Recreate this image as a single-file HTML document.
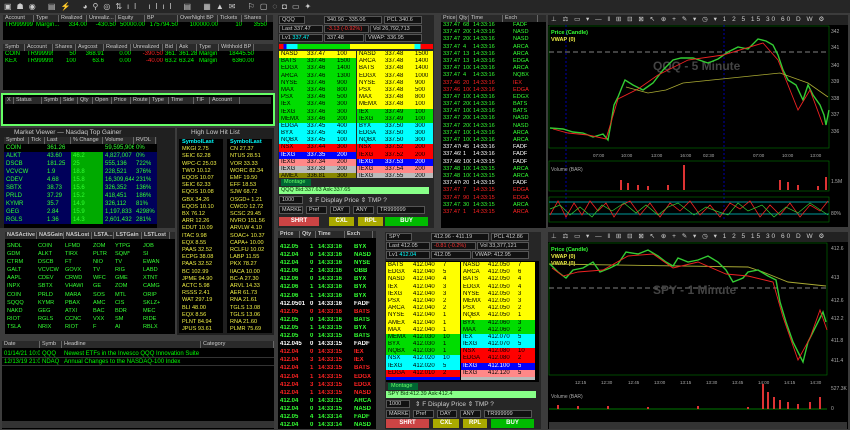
<!DOCTYPE html>
<html><head><meta charset="utf-8"><style>
*{margin:0;padding:0;box-sizing:border-box}
body{width:850px;height:429px;background:#3c3c3c;overflow:hidden;position:relative;font-family:"Liberation Sans",sans-serif;font-size:6px;color:#0f0}
.a{position:absolute}
.blk{background:#000}
.hd{background:#2a2a2a;color:#ccc;display:flex;height:7px;line-height:7px;font-size:5.5px}
.hd span{border-right:1px solid #666;padding-left:2px;overflow:hidden;white-space:nowrap}
.r{display:flex;height:7.2px;line-height:7.2px;white-space:nowrap;overflow:hidden}
.r span{overflow:hidden;padding-left:2px}
.Y{background:#ff0;color:#000}.G{background:#0d0;color:#000}.C{background:#0ff;color:#000}.R{background:#f00;color:#000}.B{background:#00f;color:#fff}.P{background:#f88;color:#000}.S{background:#bbb;color:#000}.O{background:#880;color:#000}
.g{color:#3f3}.rd{color:#f22}.w{color:#fff}.y{color:#ee4}
.btn{position:absolute;height:9px;font-size:6px;font-weight:bold;text-align:center;line-height:9px;color:#fff}
.in{position:absolute;background:#111;border:1px solid #555;color:#ccc;font-size:5.5px;line-height:7px;height:8px;padding-left:2px}
</style></head><body>
<!-- top toolbar -->
<div class="a" style="left:0;top:0;width:850px;height:13px;background:#262626"></div>
<div class="a" style="left:4px;top:2px;color:#ccc;font-size:8px;letter-spacing:5px;line-height:9px">▣☗◉ ▤⚡ ◕⚲◎⇅ıl ılıl ▤ ▦▲✉ ⚐▢◌◘▭✦</div>

<!-- account -->
<div class="a blk" style="left:3px;top:15px;width:270px;height:25px">
<div class="hd"><span style="width:31px">Account</span><span style="width:25px">Type</span><span style="width:28px">Realized</span><span style="width:29px">Unrealiz...</span><span style="width:29px">Equity</span><span style="width:33px">BP</span><span style="width:40px">OverNight BP</span><span style="width:24px">Tickets</span><span style="width:25px">Shares</span></div>
<div class="r"><span style="width:31px">TR999999</span><span style="width:25px">Margin...</span><span style="width:28px;text-align:right">334.00</span><span style="width:29px;text-align:right">-430.50</span><span style="width:29px;text-align:right">50000.00</span><span style="width:33px;text-align:right">175794.50</span><span style="width:40px;text-align:right">100000.00</span><span style="width:24px;text-align:right">10</span><span style="width:25px;text-align:right">3550</span></div>
</div>
<!-- positions -->
<div class="a blk" style="left:3px;top:44px;width:270px;height:46px">
<div class="hd"><span style="width:22px">Symb</span><span style="width:28px">Account</span><span style="width:23px">Shares</span><span style="width:28px">Avgcost</span><span style="width:27px">Realized</span><span style="width:32px">Unrealized</span><span style="width:14px">Bid</span><span style="width:20px">Ask</span><span style="width:22px">Type</span><span style="width:35px">Withhold BP</span></div>
<div class="r"><span style="width:22px">COIN</span><span style="width:28px">TR999999</span><span style="width:23px;text-align:right">50</span><span style="width:28px;text-align:right">368.91</span><span style="width:27px;text-align:right">0.00</span><span class="rd" style="width:32px;text-align:right">-390.50</span><span style="width:14px">361.1</span><span style="width:20px">361.28</span><span style="width:22px">Margin</span><span style="width:35px;text-align:right">18445.50</span></div>
<div class="r"><span style="width:22px">KEX</span><span style="width:28px">TR999999</span><span style="width:23px;text-align:right">100</span><span style="width:28px;text-align:right">63.6</span><span style="width:27px;text-align:right">0.00</span><span class="rd" style="width:32px;text-align:right">-40.00</span><span style="width:14px">63.2</span><span style="width:20px">63.24</span><span style="width:22px">Margin</span><span style="width:35px;text-align:right">6360.00</span></div>
</div>
<!-- orders -->
<div class="a blk" style="left:1px;top:93px;width:274px;height:33px;border:2px solid #6f6"><div class="hd" style="margin:2px"><span style="width:9px">X</span><span style="width:28px">Status</span><span style="width:19px">Symb</span><span style="width:17px">Side</span><span style="width:15px">Qty</span><span style="width:19px">Open</span><span style="width:19px">Price</span><span style="width:19px">Route</span><span style="width:19px">Type</span><span style="width:25px">Time</span><span style="width:16px">TIF</span><span style="width:30px">Account</span></div></div>

<!-- market viewer -->
<div class="a" style="left:0;top:128px;width:175px;height:100px;background:#202020">
<div style="height:9px;line-height:9px;color:#ccc;font-size:6.5px;padding-left:14px">Market Viewer  —  Nasdaq Top Gainer</div>
<div class="a blk" style="left:4px;top:9px;width:153px;height:91px">
<div class="hd"><span style="width:25px">Symbol</span><span style="width:16px">Tick</span><span style="width:26px">Last</span><span style="width:32px">% Change</span><span style="width:31px">Volume</span><span style="width:22px">RVOL</span></div>
<div style="color:#3f3">
<div class="r" style="height:8px;line-height:8px"><span style="width:41px">COIN</span><span style="width:26px">361.26</span><span style="width:32px"></span><span style="width:31px">59,595,906</span><span>0%</span></div>
<div class="r" style="height:8px;line-height:8px;background:#00005a"><span style="width:41px">ALKT</span><span style="width:26px">43.60</span><span style="width:32px;background:#0a0">46.2</span><span style="width:31px">4,827,007</span><span>0%</span></div>
<div class="r" style="height:8px;line-height:8px;background:#00005a"><span style="width:41px">DSCB</span><span style="width:26px">181.25</span><span style="width:32px;background:#0a0">25</span><span style="width:31px">555,136</span><span>722%</span></div>
<div class="r" style="height:8px;line-height:8px;background:#00005a"><span style="width:41px">VCVCW</span><span style="width:26px">1.9</span><span style="width:32px;background:#0a0">18.8</span><span style="width:31px">228,521</span><span>376%</span></div>
<div class="r" style="height:8px;line-height:8px;background:#00005a"><span style="width:41px">CDEV</span><span style="width:26px">4.68</span><span style="width:32px;background:#0a0">15.8</span><span style="width:31px">16,309,644</span><span>231%</span></div>
<div class="r" style="height:8px;line-height:8px;background:#00005a"><span style="width:41px">SBTX</span><span style="width:26px">38.73</span><span style="width:32px;background:#0a0">15.6</span><span style="width:31px">326,352</span><span>136%</span></div>
<div class="r" style="height:8px;line-height:8px;background:#00005a"><span style="width:41px">PRLD</span><span style="width:26px">37.29</span><span style="width:32px;background:#0a0">15.2</span><span style="width:31px">418,451</span><span>186%</span></div>
<div class="r" style="height:8px;line-height:8px;background:#00005a"><span style="width:41px">KYMR</span><span style="width:26px">35.7</span><span style="width:32px;background:#0a0">14.9</span><span style="width:31px">326,112</span><span>81%</span></div>
<div class="r" style="height:8px;line-height:8px;background:#00005a"><span style="width:41px">GEG</span><span style="width:26px">2.84</span><span style="width:32px;background:#0a0">15.9</span><span style="width:31px">1,197,833</span><span>4298%</span></div>
<div class="r" style="height:8px;line-height:8px;background:#00005a"><span style="width:41px">RGLS</span><span style="width:26px">1.36</span><span style="width:32px;background:#0a0">14.3</span><span style="width:31px">2,601,432</span><span>281%</span></div>
</div></div></div>

<!-- high low -->
<div class="a" style="left:177px;top:128px;width:97px;height:207px;background:#202020">
<div style="height:9px;line-height:9px;color:#ccc;font-size:6.5px;padding-left:14px">High Low Hit List</div>
<div class="a blk" style="left:2px;top:11px;width:44px;height:194px;color:#ee4;font-size:5.6px;line-height:7.2px;padding-left:3px">
<div style="color:#0ff;font-weight:bold">SymbolLast</div>
<div>MKGI 2.75<br>SEIC 62.28<br>WPC-C 25.03<br>TWO 10.12<br>EQOS 10.07<br>SEIC 62.33<br>EQOS 10.08<br>GBX 34.26<br>EQOS 10.10<br>BX 76.12<br>ARR 12.26<br>EDUT 10.09<br>ITAC 9.98<br>EQX 8.55<br>PAAS 32.52<br>ECPG 38.08<br>PAAS 32.52<br>BC 102.99<br>JPME 94.90<br>ACTC 5.98<br>RSSS 2.41<br>WAT 297.19<br>BLI 48.00<br>EQX 8.56<br>PLNT 84.94<br>JPUS 93.61</div></div>
<div class="a blk" style="left:50px;top:11px;width:45px;height:194px;color:#ee4;font-size:5.6px;line-height:7.2px;padding-left:3px">
<div style="color:#0ff;font-weight:bold">SymbolLast</div>
<div>CN 27.37<br>NTUS 28.51<br>VOR 33.33<br>WORC 82.34<br>EMF 19.50<br>EFF 18.53<br>SJW 68.72<br>OSGD+ 1.21<br>CWCO 12.72<br>SCSC 29.45<br>NVRO 151.56<br>ARVLW 4.10<br>SOAC+ 10.37<br>CAPA+ 10.00<br>RCLFU 10.02<br>LABP 11.55<br>PKX 78.27<br>IIACA 10.00<br>BC-A 27.30<br>ARVL 14.33<br>AER 61.73<br>RNA 21.61<br>TGLS 13.08<br>TGLS 13.06<br>RNA 21.60<br>PLMR 75.69</div></div>
</div>

<!-- NAS lists -->
<div class="a blk" style="left:5px;top:232px;width:170px;height:102px">
<div class="hd" style="font-weight:bold"><span style="width:32px">NASActive</span><span style="width:27px">NASGain</span><span style="width:28px">NASLost</span><span style="width:22px">LSTA...</span><span style="width:28px">LSTGain</span><span style="width:28px">LSTLost</span></div>
<div style="display:flex;line-height:8.1px;font-size:5.6px;margin-top:3px;color:#3f3">
<div style="width:33px;padding-left:2px">SNDL<br>GDM<br>CTRM<br>GALT<br>AAPL<br>INPX<br>COIN<br>SQQQ<br>NAKD<br>RIOT<br>TSLA</div>
<div style="width:27px">COIN<br>ALKT<br>DSCB<br>VCVCW<br>CDEV<br>SBTX<br>PRLD<br>KYMR<br>GEG<br>RGLS<br>NRIX</div>
<div style="width:28px">LFMD<br>TIRX<br>FT<br>GOVX<br>CRWD<br>VHAWI<br>MARA<br>PBAX<br>ATXI<br>CCNC<br>RIOT</div>
<div style="width:22px">ZOM<br>PLTR<br>NIO<br>TV<br>WFC<br>GE<br>SOS<br>AMC<br>BAC<br>VXX<br>F</div>
<div style="width:28px">YTPG<br>SQM*<br>TV<br>RIG<br>GME<br>ZOM<br>MTL<br>CIS<br>BDR<br>SM<br>AI</div>
<div style="width:28px">JOB<br>SI<br>EWAN<br>LABD<br>XTNT<br>CAMG<br>ORIP<br>SKLZ+<br>MEC<br>RIDE<br>RBLX</div>
</div></div>

<!-- news -->
<div class="a blk" style="left:2px;top:341px;width:272px;height:88px">
<div class="hd"><span style="width:38px">Date</span><span style="width:22px">Symb</span><span style="width:139px">Headline</span><span style="width:73px">Category</span></div>
<div class="r" style="margin-top:2px;height:8px;line-height:8px;border-bottom:1px solid #333"><span style="width:38px">01/14/21 10:00</span><span style="width:22px">QQQ</span><span style="width:139px">Newest ETFs in the Invesco QQQ Innovation Suite Gener...</span></div>
<div class="r" style="height:8px;line-height:8px;border-bottom:1px solid #333"><span style="width:38px">12/13/19 21:05</span><span style="width:22px">NDAQ</span><span style="width:139px">Annual Changes to the NASDAQ-100 Index</span></div>
<div class="a" style="left:0;top:80px;width:272px;height:7px;background:#333"></div>
</div>

<!-- QQQ montage -->
<div class="a" style="left:278px;top:15px;width:156px;height:213px;background:#262626">
<div class="in" style="left:1px;top:1px;width:26px">QQQ</div>
<div class="in" style="left:46px;top:1px;width:58px">340.90 - 335.06</div>
<div class="in" style="left:106px;top:1px;width:38px">PCL 340.6</div>
<div class="in" style="left:1px;top:10px;width:44px">Last 337.47</div>
<div class="in rd" style="left:46px;top:10px;width:45px;color:#f33">-3.13 (-0.92%)</div>
<div class="in" style="left:92px;top:10px;width:52px">Vol 26,792,713</div>
<div class="in" style="left:1px;top:19px;width:44px">Lv1 <span style="color:#0ff">337.47</span></div>
<div class="in" style="left:46px;top:19px;width:40px">337.48</div>
<div class="in" style="left:87px;top:19px;width:57px">VWAP: 336.95</div>
<div class="a" style="left:1px;top:29px;width:154px;height:5px;background:linear-gradient(90deg,#f00 0 3%,#00f 3% 5%,#0ff 5% 12%,#0d0 12% 46%,#ff0 46% 88%,#0ff 88% 92%,#f00 92%)"></div>
<div class="a" style="left:1px;top:36px;width:77px;font-size:6px">
<div class="r Y"><span style="width:26px">NASD</span><span style="width:30px">337.47</span><span>100</span></div>
<div class="r G"><span style="width:26px">BATS</span><span style="width:30px">337.46</span><span>1500</span></div>
<div class="r G"><span style="width:26px">EDGX</span><span style="width:30px">337.46</span><span>1400</span></div>
<div class="r G"><span style="width:26px">ARCA</span><span style="width:30px">337.46</span><span>1300</span></div>
<div class="r G"><span style="width:26px">NYSE</span><span style="width:30px">337.46</span><span>900</span></div>
<div class="r G"><span style="width:26px">MAX</span><span style="width:30px">337.46</span><span>800</span></div>
<div class="r G"><span style="width:26px">PSX</span><span style="width:30px">337.46</span><span>500</span></div>
<div class="r G"><span style="width:26px">IEX</span><span style="width:30px">337.46</span><span>300</span></div>
<div class="r G"><span style="width:26px">IEXG</span><span style="width:30px">337.46</span><span>300</span></div>
<div class="r G"><span style="width:26px">MEMX</span><span style="width:30px">337.46</span><span>200</span></div>
<div class="r C"><span style="width:26px">EDGA</span><span style="width:30px">337.45</span><span>400</span></div>
<div class="r C"><span style="width:26px">BYX</span><span style="width:30px">337.45</span><span>400</span></div>
<div class="r C"><span style="width:26px">NQBX</span><span style="width:30px">337.45</span><span>100</span></div>
<div class="r R"><span style="width:26px">NSX</span><span style="width:30px">337.44</span><span>300</span></div>
<div class="r B"><span style="width:26px">IEXG</span><span style="width:30px">337.35</span><span>200</span></div>
<div class="r P"><span style="width:26px">IEXG</span><span style="width:30px">337.34</span><span>200</span></div>
<div class="r S"><span style="width:26px">IEXG</span><span style="width:30px">337.33</span><span>200</span></div>
<div class="r O" style="height:5px"><span style="width:26px">AMEX</span><span style="width:30px">336.81</span><span>300</span></div>
</div>
<div class="a" style="left:79px;top:36px;width:76px;font-size:6px">
<div class="r Y"><span style="width:26px">NASD</span><span style="width:30px">337.48</span><span>1500</span></div>
<div class="r Y"><span style="width:26px">ARCA</span><span style="width:30px">337.48</span><span>1400</span></div>
<div class="r Y"><span style="width:26px">BATS</span><span style="width:30px">337.48</span><span>1400</span></div>
<div class="r Y"><span style="width:26px">EDGX</span><span style="width:30px">337.48</span><span>1000</span></div>
<div class="r Y"><span style="width:26px">NYSE</span><span style="width:30px">337.48</span><span>900</span></div>
<div class="r Y"><span style="width:26px">PSX</span><span style="width:30px">337.48</span><span>500</span></div>
<div class="r Y"><span style="width:26px">MAX</span><span style="width:30px">337.48</span><span>800</span></div>
<div class="r Y"><span style="width:26px">MEMX</span><span style="width:30px">337.48</span><span>100</span></div>
<div class="r G"><span style="width:26px">IEX</span><span style="width:30px">337.49</span><span>100</span></div>
<div class="r G"><span style="width:26px">IEXG</span><span style="width:30px">337.49</span><span>100</span></div>
<div class="r C"><span style="width:26px">BYX</span><span style="width:30px">337.50</span><span>300</span></div>
<div class="r C"><span style="width:26px">EDGA</span><span style="width:30px">337.50</span><span>300</span></div>
<div class="r C"><span style="width:26px">NQBX</span><span style="width:30px">337.50</span><span>300</span></div>
<div class="r R"><span style="width:26px">NSX</span><span style="width:30px">337.52</span><span>200</span></div>
<div class="r R"><span style="width:26px">IEXG</span><span style="width:30px">337.52</span><span>200</span></div>
<div class="r B"><span style="width:26px">IEXG</span><span style="width:30px">337.53</span><span>200</span></div>
<div class="r P"><span style="width:26px">IEXG</span><span style="width:30px">337.54</span><span>200</span></div>
<div class="r S" style="height:5px"><span style="width:26px">IEXG</span><span style="width:30px">337.55</span><span>200</span></div>
</div>
<div class="a" style="left:3px;top:164px;width:30px;height:7px;background:#063;color:#6f6;font-size:5.5px;padding-left:3px">Montage</div>
<div class="a" style="left:1px;top:172px;width:150px;height:7px;background:#8f8;color:#030;font-size:5.5px;padding-left:2px;line-height:7px">QQQ Bid:337.63 Ask:337.65</div>
<div class="in" style="left:1px;top:181px;width:24px">1000</div>
<div class="a" style="left:30px;top:181px;color:#ccc;font-size:6.5px">⇕ F Display  Price  ⇕  TMP  ?</div>
<div class="in" style="left:1px;top:191px;width:24px">MARKE</div>
<div class="in" style="left:28px;top:191px;width:21px">Pref</div>
<div class="in" style="left:52px;top:191px;width:20px">DAY</div>
<div class="in" style="left:75px;top:191px;width:21px">ANY</div>
<div class="in" style="left:99px;top:191px;width:48px">TR999999</div>
<div class="btn" style="left:1px;top:202px;width:40px;background:#c44">SHRT</div>
<div class="btn" style="left:51px;top:202px;width:25px;background:#aa0">CXL</div>
<div class="btn" style="left:80px;top:202px;width:25px;background:#aa0">RPL</div>
<div class="btn" style="left:107px;top:202px;width:43px;background:#0b0">BUY</div>
</div>

<!-- T&S top -->
<div class="a blk" style="left:441px;top:15px;width:105px;height:213px;font-size:5.6px">
<div class="hd"><span style="width:16px">Price</span><span style="width:12px">Qty</span><span style="width:34px">Time</span><span style="width:35px">Exch</span></div>
<div style="line-height:7.2px;color:#3f3">
<div class="r"><span style="width:20px">337.47</span><span style="width:10px">68</span><span style="width:40px">14:33:16</span><span>FADF</span></div>
<div class="r"><span style="width:20px">337.47</span><span style="width:10px">200</span><span style="width:40px">14:33:16</span><span>NASD</span></div>
<div class="r"><span style="width:20px">337.47</span><span style="width:10px">200</span><span style="width:40px">14:33:16</span><span>NASD</span></div>
<div class="r"><span style="width:20px">337.47</span><span style="width:10px">4</span><span style="width:40px">14:33:16</span><span>ARCA</span></div>
<div class="r"><span style="width:20px">337.47</span><span style="width:10px">13</span><span style="width:40px">14:33:16</span><span>ARCA</span></div>
<div class="r"><span style="width:20px">337.47</span><span style="width:10px">13</span><span style="width:40px">14:33:16</span><span>EDGA</span></div>
<div class="r"><span style="width:20px">337.47</span><span style="width:10px">100</span><span style="width:40px">14:33:16</span><span>ARCA</span></div>
<div class="r"><span style="width:20px">337.47</span><span style="width:10px">4</span><span style="width:40px">14:33:16</span><span>NQBX</span></div>
<div class="r rd"><span style="width:20px">337.46</span><span style="width:10px">20</span><span style="width:40px">14:33:16</span><span>IEX</span></div>
<div class="r rd"><span style="width:20px">337.46</span><span style="width:10px">100</span><span style="width:40px">14:33:16</span><span>EDGA</span></div>
<div class="r"><span style="width:20px">337.47</span><span style="width:10px">100</span><span style="width:40px">14:33:16</span><span>EDGX</span></div>
<div class="r"><span style="width:20px">337.47</span><span style="width:10px">200</span><span style="width:40px">14:33:16</span><span>BATS</span></div>
<div class="r"><span style="width:20px">337.47</span><span style="width:10px">100</span><span style="width:40px">14:33:16</span><span>BATS</span></div>
<div class="r"><span style="width:20px">337.47</span><span style="width:10px">200</span><span style="width:40px">14:33:16</span><span>NASD</span></div>
<div class="r"><span style="width:20px">337.47</span><span style="width:10px">200</span><span style="width:40px">14:33:16</span><span>NASD</span></div>
<div class="r"><span style="width:20px">337.47</span><span style="width:10px">100</span><span style="width:40px">14:33:16</span><span>ARCA</span></div>
<div class="r"><span style="width:20px">337.47</span><span style="width:10px">100</span><span style="width:40px">14:33:16</span><span>ARCA</span></div>
<div class="r w"><span style="width:20px">337.4701</span><span style="width:10px">45</span><span style="width:40px">14:33:16</span><span>FADF</span></div>
<div class="r w"><span style="width:20px">337.465</span><span style="width:10px">1</span><span style="width:40px">14:33:16</span><span>FADF</span></div>
<div class="r w"><span style="width:20px">337.4699</span><span style="width:10px">100</span><span style="width:40px">14:33:15</span><span>FADF</span></div>
<div class="r"><span style="width:20px">337.48</span><span style="width:10px">100</span><span style="width:40px">14:33:15</span><span>ARCA</span></div>
<div class="r"><span style="width:20px">337.48</span><span style="width:10px">100</span><span style="width:40px">14:33:15</span><span>ARCA</span></div>
<div class="r w"><span style="width:20px">337.4762</span><span style="width:10px">20</span><span style="width:40px">14:33:15</span><span>FADF</span></div>
<div class="r rd"><span style="width:20px">337.47</span><span style="width:10px">7</span><span style="width:40px">14:33:15</span><span>EDGA</span></div>
<div class="r rd"><span style="width:20px">337.47</span><span style="width:10px">90</span><span style="width:40px">14:33:15</span><span>EDGA</span></div>
<div class="r"><span style="width:20px">337.471</span><span style="width:10px">30</span><span style="width:40px">14:33:15</span><span>ARCA</span></div>
<div class="r rd"><span style="width:20px">337.47</span><span style="width:10px">1</span><span style="width:40px">14:33:15</span><span>ARCA</span></div>
</div></div>

<!-- T&S bottom -->
<div class="a blk" style="left:278px;top:231px;width:98px;height:198px;font-size:6px;font-weight:bold">
<div class="hd"><span style="width:22px">Price</span><span style="width:16px">Qty</span><span style="width:29px">Time</span><span style="width:28px">Exch</span></div>
<div style="margin-top:6px;color:#3f3">
<div class="r" style="height:8.1px"><span style="width:30px">412.05</span><span style="width:8px">1</span><span style="width:36px">14:33:16</span><span>BYX</span></div>
<div class="r" style="height:8.1px"><span style="width:30px">412.04</span><span style="width:8px">0</span><span style="width:36px">14:33:16</span><span>NASD</span></div>
<div class="r" style="height:8.1px"><span style="width:30px">412.04</span><span style="width:8px">0</span><span style="width:36px">14:33:16</span><span>NYSE</span></div>
<div class="r" style="height:8.1px"><span style="width:30px">412.06</span><span style="width:8px">2</span><span style="width:36px">14:33:16</span><span>OBB</span></div>
<div class="r" style="height:8.1px"><span style="width:30px">412.06</span><span style="width:8px">0</span><span style="width:36px">14:33:16</span><span>BYX</span></div>
<div class="r" style="height:8.1px"><span style="width:30px">412.06</span><span style="width:8px">1</span><span style="width:36px">14:33:16</span><span>BYX</span></div>
<div class="r" style="height:8.1px"><span style="width:30px">412.06</span><span style="width:8px">1</span><span style="width:36px">14:33:16</span><span>BYX</span></div>
<div class="r w" style="height:8.1px"><span style="width:30px">412.0501</span><span style="width:8px">0</span><span style="width:36px">14:33:16</span><span>FADF</span></div>
<div class="r rd" style="height:8.1px"><span style="width:30px">412.05</span><span style="width:8px">0</span><span style="width:36px">14:33:16</span><span>BATS</span></div>
<div class="r" style="height:8.1px"><span style="width:30px">412.05</span><span style="width:8px">0</span><span style="width:36px">14:33:16</span><span>BATS</span></div>
<div class="r" style="height:8.1px"><span style="width:30px">412.05</span><span style="width:8px">1</span><span style="width:36px">14:33:15</span><span>BYX</span></div>
<div class="r" style="height:8.1px"><span style="width:30px">412.05</span><span style="width:8px">0</span><span style="width:36px">14:33:15</span><span>BATS</span></div>
<div class="r w" style="height:8.1px"><span style="width:30px">412.045</span><span style="width:8px">0</span><span style="width:36px">14:33:15</span><span>FADF</span></div>
<div class="r rd" style="height:8.1px"><span style="width:30px">412.04</span><span style="width:8px">0</span><span style="width:36px">14:33:15</span><span>IEX</span></div>
<div class="r rd" style="height:8.1px"><span style="width:30px">412.04</span><span style="width:8px">3</span><span style="width:36px">14:33:15</span><span>IEX</span></div>
<div class="r rd" style="height:8.1px"><span style="width:30px">412.04</span><span style="width:8px">1</span><span style="width:36px">14:33:15</span><span>BATS</span></div>
<div class="r rd" style="height:8.1px"><span style="width:30px">412.04</span><span style="width:8px">1</span><span style="width:36px">14:33:15</span><span>EDGX</span></div>
<div class="r rd" style="height:8.1px"><span style="width:30px">412.04</span><span style="width:8px">3</span><span style="width:36px">14:33:15</span><span>EDGX</span></div>
<div class="r rd" style="height:8.1px"><span style="width:30px">412.04</span><span style="width:8px">1</span><span style="width:36px">14:33:15</span><span>NASD</span></div>
<div class="r" style="height:8.1px"><span style="width:30px">412.04</span><span style="width:8px">0</span><span style="width:36px">14:33:15</span><span>ARCA</span></div>
<div class="r" style="height:8.1px"><span style="width:30px">412.04</span><span style="width:8px">0</span><span style="width:36px">14:33:15</span><span>NASD</span></div>
<div class="r" style="height:8.1px"><span style="width:30px">412.05</span><span style="width:8px">4</span><span style="width:36px">14:33:14</span><span>FADF</span></div>
<div class="r" style="height:8.1px"><span style="width:30px">412.04</span><span style="width:8px">0</span><span style="width:36px">14:33:14</span><span>NASD</span></div>
</div></div>

<!-- SPY montage -->
<div class="a" style="left:385px;top:232px;width:156px;height:197px;background:#262626">
<div class="in" style="left:1px;top:1px;width:26px">SPY</div>
<div class="in" style="left:46px;top:1px;width:58px">412.96 - 411.19</div>
<div class="in" style="left:106px;top:1px;width:38px">PCL 412.86</div>
<div class="in" style="left:1px;top:10px;width:44px">Last 412.05</div>
<div class="in" style="left:46px;top:10px;width:45px;color:#f33">-0.81 (-0.2%)</div>
<div class="in" style="left:92px;top:10px;width:52px">Vol 33,377,121</div>
<div class="in" style="left:1px;top:19px;width:44px">Lv1 <span style="color:#0ff">412.04</span></div>
<div class="in" style="left:46px;top:19px;width:40px">412.05</div>
<div class="in" style="left:87px;top:19px;width:57px">VWAP: 412.95</div>
<div class="a blk" style="left:1px;top:29px;width:153px;height:121px"></div>
<div class="a" style="left:1px;top:30px;width:74px;font-size:6px">
<div class="r Y"><span style="width:25px">BATS</span><span style="width:30px">412.040</span><span>7</span></div>
<div class="r Y"><span style="width:25px">EDGX</span><span style="width:30px">412.040</span><span>5</span></div>
<div class="r Y"><span style="width:25px">NASD</span><span style="width:30px">412.040</span><span>4</span></div>
<div class="r Y"><span style="width:25px">IEX</span><span style="width:30px">412.040</span><span>3</span></div>
<div class="r Y"><span style="width:25px">IEXG</span><span style="width:30px">412.040</span><span>3</span></div>
<div class="r Y"><span style="width:25px">PSX</span><span style="width:30px">412.040</span><span>2</span></div>
<div class="r Y"><span style="width:25px">ARCA</span><span style="width:30px">412.040</span><span>2</span></div>
<div class="r Y"><span style="width:25px">NYSE</span><span style="width:30px">412.040</span><span>1</span></div>
<div class="r Y"><span style="width:25px">AMEX</span><span style="width:30px">412.040</span><span>1</span></div>
<div class="r Y"><span style="width:25px">MAX</span><span style="width:30px">412.040</span><span>1</span></div>
<div class="r G"><span style="width:25px">MEMX</span><span style="width:30px">412.030</span><span>10</span></div>
<div class="r G"><span style="width:25px">BYX</span><span style="width:30px">412.030</span><span>1</span></div>
<div class="r G"><span style="width:25px">NQBX</span><span style="width:30px">412.030</span><span>1</span></div>
<div class="r C"><span style="width:25px">NSX</span><span style="width:30px">412.020</span><span>10</span></div>
<div class="r C"><span style="width:25px">IEXG</span><span style="width:30px">412.020</span><span>5</span></div>
<div class="r R"><span style="width:25px">EDGA</span><span style="width:30px">412.010</span><span>2</span></div>
<div class="r B" style="height:3px"></div>
</div>
<div class="a" style="left:76px;top:30px;width:74px;font-size:6px">
<div class="r Y"><span style="width:25px">NASD</span><span style="width:30px">412.050</span><span>7</span></div>
<div class="r Y"><span style="width:25px">ARCA</span><span style="width:30px">412.050</span><span>6</span></div>
<div class="r Y"><span style="width:25px">BATS</span><span style="width:30px">412.050</span><span>4</span></div>
<div class="r Y"><span style="width:25px">EDGX</span><span style="width:30px">412.050</span><span>4</span></div>
<div class="r Y"><span style="width:25px">NYSE</span><span style="width:30px">412.050</span><span>3</span></div>
<div class="r Y"><span style="width:25px">MEMX</span><span style="width:30px">412.050</span><span>3</span></div>
<div class="r Y"><span style="width:25px">PSX</span><span style="width:30px">412.050</span><span>2</span></div>
<div class="r Y"><span style="width:25px">NQBX</span><span style="width:30px">412.050</span><span>1</span></div>
<div class="r G"><span style="width:25px">BYX</span><span style="width:30px">412.060</span><span>3</span></div>
<div class="r G"><span style="width:25px">MAX</span><span style="width:30px">412.060</span><span>2</span></div>
<div class="r C"><span style="width:25px">IEX</span><span style="width:30px">412.070</span><span>5</span></div>
<div class="r C"><span style="width:25px">IEXG</span><span style="width:30px">412.070</span><span>5</span></div>
<div class="r R"><span style="width:25px">NSX</span><span style="width:30px">412.080</span><span>10</span></div>
<div class="r R"><span style="width:25px">EDGA</span><span style="width:30px">412.080</span><span>2</span></div>
<div class="r B"><span style="width:25px">IEXG</span><span style="width:30px">412.100</span><span>5</span></div>
<div class="r P"><span style="width:25px">IEXG</span><span style="width:30px">412.120</span><span>5</span></div>
<div class="r S" style="height:3px"></div>
</div>
<div class="a" style="left:3px;top:151px;width:30px;height:7px;background:#063;color:#6f6;font-size:5.5px;padding-left:3px">Montage</div>
<div class="a" style="left:1px;top:159px;width:150px;height:7px;background:#8f8;color:#030;font-size:5.5px;padding-left:2px;line-height:7px">SPY Bid:412.39 Ask:412.4</div>
<div class="in" style="left:1px;top:168px;width:24px">1000</div>
<div class="a" style="left:30px;top:168px;color:#ccc;font-size:6.5px">⇕ F Display  Price  ⇕  TMP  ?</div>
<div class="in" style="left:1px;top:178px;width:24px">MARKE</div>
<div class="in" style="left:28px;top:178px;width:21px">Pref</div>
<div class="in" style="left:52px;top:178px;width:20px">DAY</div>
<div class="in" style="left:75px;top:178px;width:21px">ANY</div>
<div class="in" style="left:99px;top:178px;width:48px">TR999999</div>
<div class="btn" style="left:1px;top:187px;width:43px;background:#c44">SHRT</div>
<div class="btn" style="left:48px;top:187px;width:26px;background:#aa0">CXL</div>
<div class="btn" style="left:78px;top:187px;width:24px;background:#aa0">RPL</div>
<div class="btn" style="left:106px;top:187px;width:43px;background:#0b0">BUY</div>
</div>

<!-- QQQ chart -->
<div class="a blk" style="left:548px;top:15px;width:300px;height:212px">
<div style="height:10px;background:#222;color:#ccc;font-size:6.5px;line-height:10px;padding-left:3px;letter-spacing:2px">⊥ ⚖ ▭ ▾ — ‖ ⊞ ⊟ ⊠ ↖ ⊕ + ✎ ▾ ◷ ▾ 1 2 5 15 30 60 D W ⚙</div>
<svg class="a" style="left:0;top:10px" width="300" height="202">
<rect x="1" y="1" width="280" height="122" fill="none" stroke="#070" stroke-width="0.6"/>
<line x1="1" y1="27" x2="281" y2="27" stroke="#aaa" stroke-dasharray="5,3" stroke-width="0.8"/>
<line x1="18" y1="0" x2="18" y2="195" stroke="#00a" stroke-dasharray="2,2"/>
<line x1="176" y1="0" x2="176" y2="195" stroke="#00a" stroke-dasharray="2,2"/>
<text x="105" y="45" fill="#444" font-size="12" font-weight="bold" font-family="Liberation Sans">QQQ - 5 Minute</text>
<text x="3" y="9" fill="#3f3" font-size="5.5" font-weight="bold" font-family="Liberation Sans">Price (Candle)</text>
<text x="3" y="16" fill="#ee4" font-size="5.5" font-weight="bold" font-family="Liberation Sans">VWAP (0)</text>
<polyline fill="none" stroke="#3c3" stroke-width="1.4" points="2,103 15,104 25,107 35,108 45,112 55,109 60,115 63,98 66,80 70,72 74,62 77,55 85,60 95,65 105,58 115,45 125,35 133,33 145,33 160,38 170,34 180,27 190,22 200,24 210,14 218,16 225,20 230,30 235,45 240,55 248,60 255,75 260,60 265,70 272,80 276,90 278,100 281,85"/>
<polyline fill="none" stroke="#e22" stroke-width="0.9" points="5,104 20,108 40,110 58,114 70,74 90,64 110,50 140,35 175,30 215,18 230,35 240,60 250,85 262,65 275,100"/>
<polyline fill="none" stroke="#aa3" stroke-width="0.8" points="78,62 100,68 118,65 135,58 232,48 260,58 280,72"/>
<g fill="#aaa" font-size="5" font-family="Liberation Sans"><text x="283" y="8">342</text><text x="283" y="24">341</text><text x="283" y="42">340</text><text x="283" y="58">339</text><text x="283" y="75">338</text><text x="283" y="91">337</text><text x="283" y="108">336</text><text x="283" y="158">1.5M</text><text x="283" y="190">80%</text></g>
<g fill="#aaa" font-size="4.5" font-family="Liberation Sans"><text x="45" y="132">07:00</text><text x="73" y="132">10:00</text><text x="103" y="132">13:00</text><text x="132" y="132">16:00</text><text x="155" y="132">02:30</text><text x="205" y="132">07:00</text><text x="234" y="132">10:00</text><text x="262" y="132">13:00</text></g>
<rect x="1" y="136" width="280" height="30" fill="none" stroke="#070" stroke-width="0.6"/>
<text x="3" y="146" fill="#aaa" font-size="5" font-family="Liberation Sans">Volume (BAR)</text>
<path d="M73 165V155M80 165V158M90 165V160M100 165V161M120 165V160M136 165V140M232 165V155M240 165V157M250 165V160M270 165V161M278 165V152" stroke="#d33" stroke-width="2"/>
<rect x="1" y="172" width="280" height="25" fill="none" stroke="#070" stroke-width="0.6"/>
<line x1="1" y1="177" x2="281" y2="177" stroke="#099"/><line x1="1" y1="189" x2="281" y2="189" stroke="#099"/>
<polyline fill="none" stroke="#e22" stroke-width="0.8" points="2,190 10,176 18,192 26,178 34,190 42,176 50,186 58,178 66,192 74,180 82,176 92,190 102,178 112,192 122,178 132,186 142,176 152,190 162,180 172,192 182,178 192,184 202,176 212,192 222,180 232,190 242,178 252,192 262,180 272,186 280,176"/>
<polyline fill="none" stroke="#3c3" stroke-width="0.7" points="2,184 12,180 22,190 32,182 44,192 54,180 64,186 76,178 88,188 98,180 110,190 120,182 130,178 146,190 158,182 168,186 180,190 190,178 200,186 214,180 226,192 238,182 250,188 262,178 280,190"/>
<rect x="1" y="203" width="298" height="7" fill="#333"/>
</svg></div>

<!-- SPY chart -->
<div class="a blk" style="left:548px;top:232px;width:300px;height:197px">
<div style="height:10px;background:#222;color:#ccc;font-size:6.5px;line-height:10px;padding-left:3px;letter-spacing:2px">⊥ ⚖ ▭ ▾ — ‖ ⊞ ⊟ ⊠ ↖ ⊕ + ✎ ▾ ◷ ▾ 1 2 5 15 30 60 D W ⚙</div>
<svg class="a" style="left:0;top:10px" width="300" height="187">
<rect x="1" y="1" width="278" height="132" fill="none" stroke="#070" stroke-width="0.6"/>
<line x1="1" y1="46" x2="279" y2="46" stroke="#aaa" stroke-dasharray="5,3" stroke-width="0.8"/>
<text x="105" y="52" fill="#444" font-size="12" font-weight="bold" font-family="Liberation Sans">SPY - 1 Minute</text>
<text x="3" y="9" fill="#3f3" font-size="5.5" font-weight="bold" font-family="Liberation Sans">Price (Candle)</text>
<text x="3" y="16" fill="#ee4" font-size="5.5" font-weight="bold" font-family="Liberation Sans">VWAP (0)</text>
<text x="3" y="23" fill="#ee4" font-size="5.5" font-weight="bold" font-family="Liberation Sans">VWAP (0)</text>
<polyline fill="none" stroke="#aa3" stroke-width="0.9" points="1,22 200,25 215,30 240,40 278,44"/>
<polyline fill="none" stroke="#3c3" stroke-width="1.4" points="2,22 10,30 18,36 25,28 35,26 45,20 52,30 62,26 70,22 78,10 90,12 100,8 110,14 118,20 125,24 130,16 140,20 150,18 160,14 170,20 178,28 185,40 195,36 200,30 210,28 220,34 228,38 232,60 238,80 245,100 250,110 255,120 260,100 265,90 270,80 275,70 278,80"/>
<polyline fill="none" stroke="#e22" stroke-width="0.9" points="4,26 15,34 30,30 55,28 80,14 105,12 125,26 150,20 178,32 200,34 225,40 235,75 250,118 262,96 272,68 279,88"/>
<g fill="#aaa" font-size="5" font-family="Liberation Sans"><text x="283" y="8">412.6</text><text x="283" y="37">413</text><text x="283" y="60">412.6</text><text x="283" y="78">412.2</text><text x="283" y="100">411.8</text><text x="283" y="120">411.4</text><text x="283" y="148">527.3K</text><text x="283" y="168">0</text></g>
<g fill="#aaa" font-size="4.5" font-family="Liberation Sans"><text x="27" y="142">12:15</text><text x="53" y="142">12:30</text><text x="80" y="142">12:45</text><text x="106" y="142">13:00</text><text x="132" y="142">13:15</text><text x="158" y="142">13:30</text><text x="184" y="142">13:45</text><text x="210" y="142">14:00</text><text x="236" y="142">14:15</text><text x="262" y="142">14:30</text></g>
<text x="3" y="156" fill="#aaa" font-size="5" font-family="Liberation Sans">Volume (BAR)</text>
<line x1="1" y1="167" x2="279" y2="167" stroke="#070"/>
<path d="M10 167V163M30 167V164M60 167V164M100 167V165M150 167V164M200 167V165M215 167V142M220 167V150M226 167V155M232 167V158M240 167V160M250 167V162M262 167V160M272 167V155" stroke="#d33" stroke-width="2"/>
<rect x="1" y="180" width="298" height="7" fill="#333"/>
</svg></div>
</body></html>
